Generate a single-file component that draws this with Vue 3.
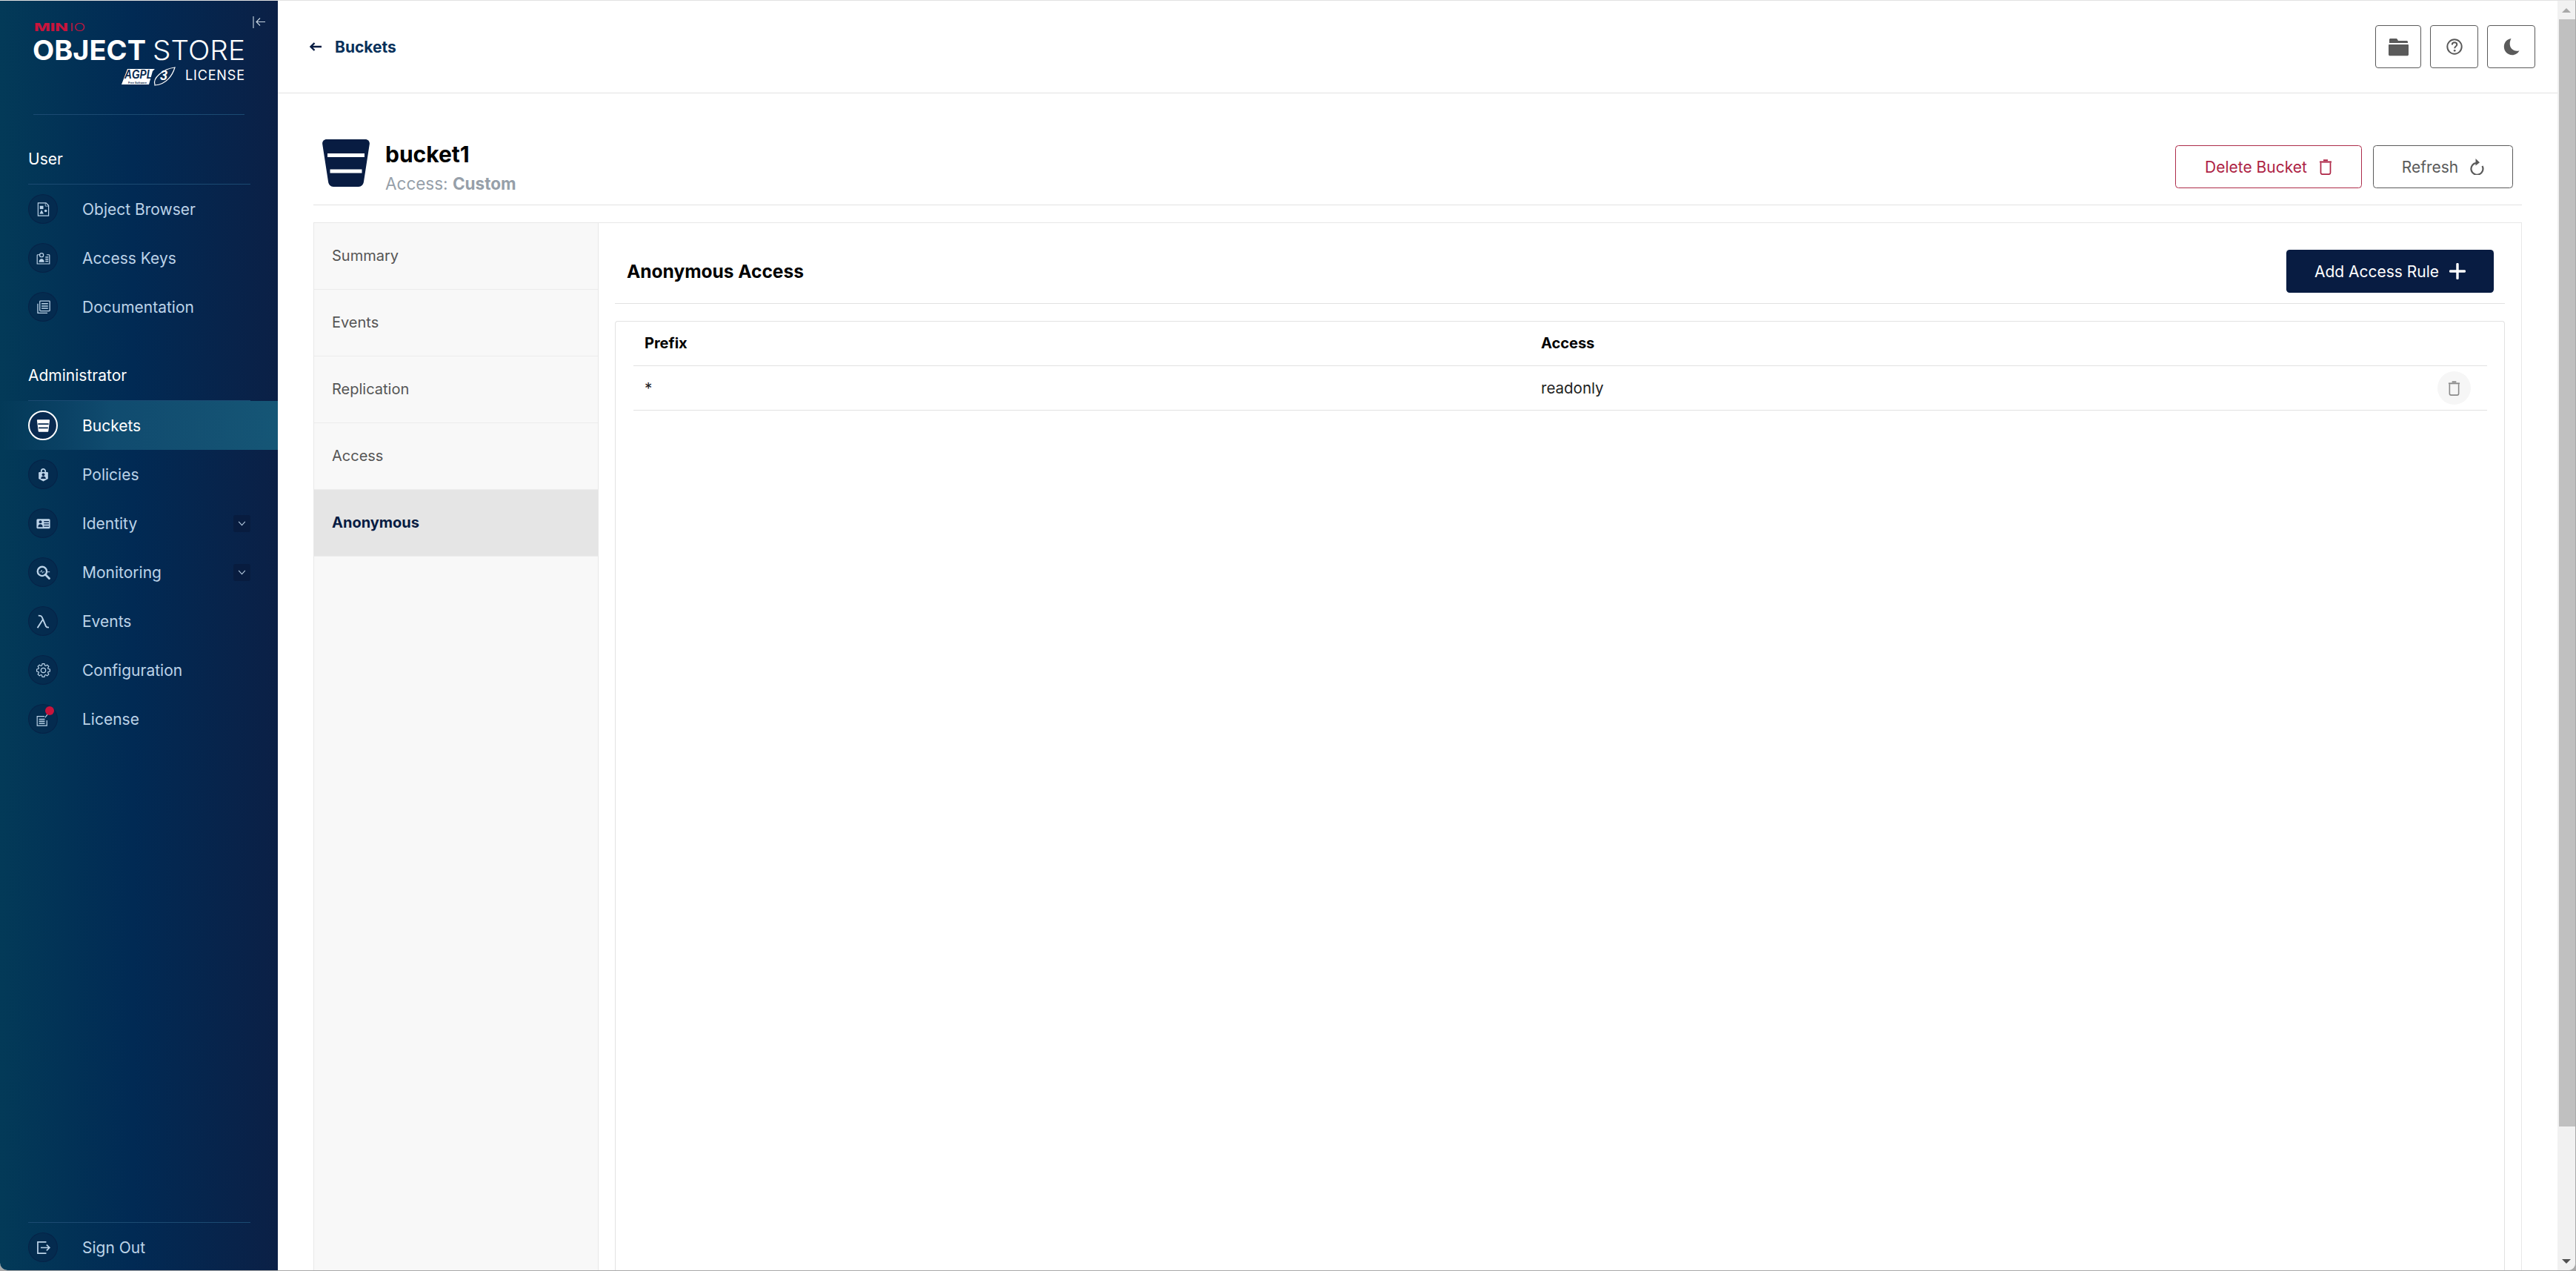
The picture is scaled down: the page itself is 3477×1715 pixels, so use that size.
<script setup>
function gear() {
  const cx = 12, cy = 12, n = 8, r1 = 11.4, r2 = 8.6
  let d = ''
  for (let i = 0; i < n; i++) {
    const a = (i / n) * Math.PI * 2
    const w = 0.2, g = 0.25
    const pts = [
      [r2, a - g - 0.06], [r1, a - w + 0.03], [r1, a + w - 0.03], [r2, a + g + 0.06]
    ]
    pts.forEach(([r, t], j) => {
      const x = (cx + r * Math.cos(t)).toFixed(2)
      const y = (cy + r * Math.sin(t)).toFixed(2)
      d += (i === 0 && j === 0 ? 'M' : 'L') + x + ' ' + y + ' '
    })
  }
  return d + 'Z'
}

const icons = {
  browser:
    '<path d="M3 1h13.500L21 5.500V23H3z" fill="none" stroke="currentColor" stroke-width="1.500"/><path d="M15.500 1.500v5h5" fill="none" stroke="currentColor" stroke-width="1"/><rect x="6" y="6" width="6" height="5.500" fill="currentColor"/><path d="M9 13l3.500 6.500h-7z" fill="currentColor"/><circle cx="16" cy="14.500" r="2.300" fill="currentColor"/>',
  keys:
    '<path d="M6.500 6H2.500a1 1 0 0 0-1 1v14.500h21V7a1 1 0 0 0-1-1h-4" fill="none" stroke="currentColor" stroke-width="1.500"/><circle cx="9" cy="6.500" r="3.200" fill="none" stroke="currentColor" stroke-width="1.600"/><path d="M4.500 18.500c0-3.500 2-5.500 4.500-5.500s4.500 2 4.500 5.500z" fill="currentColor"/><path d="M15.500 10h5M15.500 13.500h5M15.500 17h5" stroke="currentColor" stroke-width="2"/>',
  docs:
    '<path d="M2.500 6v16H19" fill="none" stroke="currentColor" stroke-width="1.600"/><rect x="6" y="1.500" width="17" height="17" rx="1" fill="none" stroke="currentColor" stroke-width="1.600"/><path d="M9 6h11M9 10h11M9 14h11" stroke="currentColor" stroke-width="1.800"/>',
  bucket:
    '<path d="M2.600 1.500h18.800c.9 0 1.500.7 1.400 1.600l-2.200 18c-.1.800-.8 1.400-1.600 1.400H5c-.8 0-1.500-.6-1.600-1.400L1.200 3.100C1.100 2.200 1.700 1.500 2.600 1.500z" fill="currentColor"/><path d="M3 9h18M4 15.500h16" stroke="#092a50" stroke-width="2.200"/>',
  policies:
    '<path d="M8.500 8V6a3.500 3.500 0 0 1 7 0v2" fill="none" stroke="currentColor" stroke-width="2.200"/><path d="M5.500 7.500h13c.8 0 1.500.7 1.500 1.500v10l-8 4.500L4 19V9c0-.8.700-1.500 1.500-1.500z" fill="currentColor"/><circle cx="12" cy="11.800" r="2.400" fill="#0a2a50"/><path d="M7.800 19c0-2.800 1.800-4.500 4.200-4.500s4.200 1.700 4.200 4.500z" fill="#0a2a50"/>',
  identity:
    '<rect x="0.500" y="4" width="23" height="16.500" rx="2" fill="currentColor"/><circle cx="7" cy="9" r="2.500" fill="#0a2a50"/><path d="M3 18c0-3.200 1.800-5 4-5s4 1.800 4 5z" fill="#0a2a50"/><path d="M13 8.500h8.500M13 12.500h8.500M13 16.500h8.500" stroke="#0a2a50" stroke-width="1.700"/>',
  monitoring:
    '<circle cx="10" cy="10" r="7.800" fill="none" stroke="currentColor" stroke-width="3"/><path d="M15.500 15.500l6.500 6.500" stroke="currentColor" stroke-width="3.600" stroke-linecap="round"/><path d="M5.500 11h2l1.500-3 1.500 5 1.200-2h2.500" fill="none" stroke="currentColor" stroke-width="1"/><path d="M19 11h4" stroke="currentColor" stroke-width="1.300"/>',
  lambda:
    '<path d="M3.500 2c4.500 0 5.500.8 7 4.500l6 14c.7 1.300 1.700 1.800 5 1.800M11.300 8.500L2 23" fill="none" stroke="currentColor" stroke-width="2.400"/>',
  config:
    `<path d="${gear()}" fill="none" stroke="currentColor" stroke-width="1.500" stroke-linejoin="round"/><circle cx="12" cy="12" r="4" fill="none" stroke="currentColor" stroke-width="1.600"/>`,
  license:
    '<path d="M14 7H1.500v16H18V14" fill="none" stroke="currentColor" stroke-width="1.500"/><path d="M4.500 12h10M4.500 15.500h10M4.500 19h10" stroke="currentColor" stroke-width="1.800"/><path d="M15 9l4-5" stroke="currentColor" stroke-width="1.500"/>',
  signout:
    '<path d="M17 2.500H2.500v19H17" fill="none" stroke="currentColor" stroke-width="2.200"/><path d="M7.500 12h15M17.500 7l5 5-5 5" fill="none" stroke="currentColor" stroke-width="2.200"/>'
}

const userItems = [
  { label: 'Object Browser', icon: 'browser' },
  { label: 'Access Keys', icon: 'keys' },
  { label: 'Documentation', icon: 'docs' }
]
const adminItems = [
  { label: 'Buckets', icon: 'bucket', active: true },
  { label: 'Policies', icon: 'policies' },
  { label: 'Identity', icon: 'identity', chevron: true },
  { label: 'Monitoring', icon: 'monitoring', chevron: true },
  { label: 'Events', icon: 'lambda' },
  { label: 'Configuration', icon: 'config' },
  { label: 'License', icon: 'license', badge: true }
]
const tabs = ['Summary', 'Events', 'Replication', 'Access', 'Anonymous']
</script>

<template>
  <div class="root">
    <aside class="sidebar">
      <div class="logo">
        <svg class="logo-svg" viewBox="0 0 375 154" width="375" height="154">
          <text x="46" y="42" class="l-minio" textLength="46" lengthAdjust="spacingAndGlyphs">MIN</text>
          <text x="94" y="42" class="l-minio2" textLength="21" lengthAdjust="spacingAndGlyphs">IO</text>
          <text x="44" y="81" class="l-object" textLength="153" lengthAdjust="spacingAndGlyphs">OBJECT</text>
          <text x="206" y="81" class="l-store" textLength="125" lengthAdjust="spacingAndGlyphs">STORE</text>
          <path d="M172 93h37l-3 3-5 18h-37z" fill="#fff"/>
          <text x="168" y="106" class="l-agpl" textLength="38" lengthAdjust="spacingAndGlyphs">AGPL</text>
          <text x="173" y="113" class="l-free" textLength="25" lengthAdjust="spacingAndGlyphs">Free Software</text>
          <path d="M209 114c-3-8 10-21 27-23-3 10-11 23-27 24z" fill="#0a2a50" stroke="#fff" stroke-width="1.200"/>
          <text x="216" y="108" class="l-3">3</text>
          <text x="250" y="108" class="l-license" textLength="80" lengthAdjust="spacing">LICENSE</text>
        </svg>
        <svg class="collapse" viewBox="0 0 18 18" width="18" height="18">
          <path d="M1 1v16M17 8.500H5M10 3.500l-5 5 5 5" fill="none" stroke="#c9d6e2" stroke-width="1.100"/>
        </svg>
      </div>
      <div class="logo-rule"></div>

      <div class="sec-head">User</div>
      <div v-for="it in userItems" :key="it.label" class="nav">
        <span class="circle"><svg viewBox="0 0 24 24" width="19" height="19" v-html="icons[it.icon]"></svg></span>
        <span class="nav-label">{{ it.label }}</span>
      </div>

      <div class="sec-head">Administrator</div>
      <div v-for="it in adminItems" :key="it.label" class="nav" :class="{ active: it.active }">
        <span class="circle">
          <svg viewBox="0 0 24 24" width="19" height="19" v-html="icons[it.icon]"></svg>
          <span v-if="it.badge" class="badge"></span>
        </span>
        <span class="nav-label">{{ it.label }}</span>
        <span v-if="it.chevron" class="chev">
          <svg viewBox="0 0 12 8" width="11" height="7"><path d="M1 1l5 5.500L11 1" fill="none" stroke="#b5cbe0" stroke-width="1.200"/></svg>
        </span>
      </div>

      <div class="spacer"></div>
      <div class="foot-rule"></div>
      <div class="nav foot">
        <span class="circle"><svg viewBox="0 0 24 24" width="19" height="19" v-html="icons.signout"></svg></span>
        <span class="nav-label">Sign Out</span>
      </div>
    </aside>

    <main class="main">
      <header class="topbar">
        <div class="back">
          <svg viewBox="0 0 16 12" width="16" height="12"><path d="M16 6H2M6.500 1L1.500 6l5 5" fill="none" stroke="#081c42" stroke-width="2.400"/></svg>
          <span>Buckets</span>
        </div>
        <div class="top-actions">
          <button class="btn-icon wide">
            <svg viewBox="0 0 28 25" width="28" height="25"><path d="M2 2.500c0-.8.700-1.500 1.500-1.500H11c1 0 1.500.5 2 1.300L14 4h11.500c.9 0 1.500.7 1.500 1.500V7H2z" fill="#5a5a5a"/><path d="M1 9h26c.6 0 1 .4 1 1v12.500c0 1-.8 1.800-1.800 1.800H2.800c-1 0-1.800-.8-1.800-1.800V10c0-.6.400-1 1-1z" fill="#5a5a5a"/></svg>
          </button>
          <button class="btn-icon">
            <svg viewBox="0 0 22 22" width="22" height="22"><circle cx="11" cy="11" r="9.700" fill="none" stroke="#5a5a5a" stroke-width="2"/><path d="M7.800 8.500c0-2 1.400-3.200 3.300-3.200s3.200 1.200 3.200 2.900c0 2.400-3.100 2.400-3.100 5" fill="none" stroke="#5a5a5a" stroke-width="2"/><circle cx="11.200" cy="16.300" r="1.400" fill="#5a5a5a"/></svg>
          </button>
          <button class="btn-icon">
            <svg viewBox="0 0 22 24" width="22" height="24"><path d="M10.500 1C4.800 1.700.8 6.200.8 12c0 6.300 5 11.200 11 11.200 4.300 0 8-2.500 9.700-6-1 .4-2.200.6-3.300.6-5.500 0-9.500-4.400-9.500-9.500 0-2.800.6-5 1.800-7.300z" fill="#5a5a5a"/></svg>
          </button>
        </div>
      </header>

      <section class="page-head">
        <svg class="bucket-big" viewBox="0 0 64 64" width="64" height="64">
          <path d="M6 0h52c4 0 6.300 3 5.800 6.500L56 57c-.5 4-3.200 7-7 7H15c-3.800 0-6.500-3-7-7L.2 6.500C-.3 3 2 0 6 0z" fill="#081c42"/>
          <path d="M7 21.500h50" stroke="#fff" stroke-width="5"/>
          <path d="M10.500 43h43" stroke="#fff" stroke-width="5"/>
        </svg>
        <div class="bucket-text">
          <div class="bucket-name">bucket1</div>
          <div class="bucket-sub">Access: <b>Custom</b></div>
        </div>
        <div class="page-actions">
          <button class="btn danger">
            <span>Delete Bucket</span>
            <svg viewBox="0 0 18 22" width="18" height="22"><path d="M2.500 5.500V19c0 1.300 1 2.200 2.200 2.200h8.600c1.200 0 2.200-.9 2.200-2.200V5.500" fill="none" stroke="currentColor" stroke-width="1.700"/><path d="M1 3.500h16v2H1z" fill="currentColor"/><path d="M6 2.300h6" stroke="currentColor" stroke-width="2"/></svg>
          </button>
          <button class="btn neutral">
            <span>Refresh</span>
            <svg viewBox="0 0 20 22" width="20" height="22"><path d="M8.700 4.800A8 8 0 1 0 16.500 9" fill="none" stroke="currentColor" stroke-width="2.200" transform="translate(1 1)"/><path d="M8.500 0l5.500 5.300-5.500 4.200z" fill="currentColor"/></svg>
          </button>
        </div>
      </section>

      <section class="panel">
        <nav class="tabs">
          <div v-for="t in tabs" :key="t" class="tab" :class="{ on: t === 'Anonymous' }">{{ t }}</div>
        </nav>
        <div class="pane">
          <div class="pane-head">
            <h2>Anonymous Access</h2>
            <button class="btn primary">
              <span>Add Access Rule</span>
              <svg viewBox="0 0 22 22" width="22" height="22"><path d="M11 1.500v19M1.500 11h19" stroke="#fff" stroke-width="3.400" stroke-linecap="round"/></svg>
            </button>
          </div>
          <div class="table">
            <div class="row head"><span>Prefix</span><span>Access</span></div>
            <div class="row">
              <span>*</span><span>readonly</span>
              <span class="trash">
                <svg viewBox="0 0 18 22" width="17" height="21"><path d="M2.500 5.500V19c0 1.300 1 2.200 2.200 2.200h8.600c1.200 0 2.200-.9 2.200-2.200V5.500" fill="none" stroke="#8a8a8a" stroke-width="1.700"/><path d="M1 3.500h16v2H1z" fill="#8a8a8a"/><path d="M6 2.300h6" stroke="#8a8a8a" stroke-width="2"/></svg>
              </span>
            </div>
          </div>
        </div>
      </section>
    </main>

    <div class="scrollbar">
      <div class="sb-btn"><i class="tri up"></i></div>
      <div class="sb-thumb"></div>
      <div class="sb-track"></div>
      <div class="sb-btn"><i class="tri down"></i></div>
    </div>
  </div>
</template>

<style scoped>
.root {
  display: flex;
  height: 1714px;
  box-sizing: border-box;
  border-top: 1px solid #e2e2e2;
  border-right: 1px solid #a9a9a9;
  background: #fff;
  overflow: hidden;
  border-radius: 0 0 10px 10px;
  font-family: Inter, "Liberation Sans", sans-serif;
}
.sidebar {
  position: relative;
  width: 375px;
  flex: none;
  display: flex;
  flex-direction: column;
  background: linear-gradient(90deg, #033a58 0%, #012a54 48%, #0b2046 100%);
  color: #bcd3e8;
}
.logo { height: 153px; flex: none; }
.logo-svg { display: block; margin-top: -1px; }
.l-minio { font: 800 14px Inter, sans-serif; fill: #c8143c; }
.l-minio2 { font: 300 14px Inter, sans-serif; fill: #c8143c; }
.l-object { font: 700 37px Inter, sans-serif; fill: #fff; }
.l-store { font: 300 37px Inter, sans-serif; fill: #fff; }
.l-agpl { font: italic 700 16px "Liberation Sans", sans-serif; fill: #0a2a50; }
.l-free { font: 700 3.500px "Liberation Sans", sans-serif; fill: #0a2a50; }
.l-3 { font: italic 700 18px "Liberation Sans", sans-serif; fill: #fff; }
.l-license { font: 400 18px Inter, sans-serif; fill: #fff; }
.collapse { position: absolute; left: 341px; top: 20px; }
.logo-rule { height: 1px; margin: 0 45px; background: #1b4a72; flex: none; }
.sec-head {
  flex: none;
  margin: 43px 37px 0 38px;
  line-height: 34px;
  padding-bottom: 16px;
  border-bottom: 1px solid #1b4a72;
  font-size: 21px;
  color: #fff;
}
.nav {
  flex: none;
  height: 66px;
  display: flex;
  align-items: center;
  padding-left: 38px;
  font-size: 21px;
}
.nav.foot { height: 64px; box-sizing: border-box; padding-top: 2px; }
.circle {
  position: relative;
  flex: none;
  width: 40px;
  height: 40px;
  box-sizing: border-box;
  border: 1px solid rgba(8, 28, 66, 0.55);
  border-radius: 50%;
  background: rgba(8, 28, 66, 0.35);
  display: flex;
  align-items: center;
  justify-content: center;
}
.nav-label { margin-left: 33px; }
.nav.active {
  background: linear-gradient(90deg, rgba(21, 86, 120, 0) 0%, rgba(21, 86, 120, 0.75) 40%, #155676 100%);
  color: #fff;
}
.nav.active .circle { border: 2px solid #fff; background: #092a50; color: #fff; }
.badge {
  position: absolute;
  left: 22px;
  top: 2px;
  width: 12px;
  height: 12px;
  border-radius: 50%;
  background: #c8143c;
}
.chev {
  margin-left: auto;
  margin-right: 37px;
  width: 23px;
  height: 23px;
  border-radius: 3px;
  background: #081c3f;
  display: flex;
  align-items: center;
  justify-content: center;
}
.spacer { flex: 1; }
.foot-rule { height: 1px; margin: 0 37px 0 38px; background: #1b4a72; flex: none; }

.main { flex: 1; min-width: 0; display: flex; flex-direction: column; }
.topbar {
  flex: none;
  height: 125px;
  box-sizing: border-box;
  border-bottom: 1px solid #e2e2e2;
  padding: 0 30px 0 43px;
  display: flex;
  align-items: center;
  justify-content: space-between;
}
.back {
  display: flex;
  align-items: center;
  gap: 18px;
  font-size: 21px;
  font-weight: 700;
  color: #07305a;
}
.top-actions { display: flex; gap: 12px; }
.btn-icon {
  width: 65px;
  height: 58px;
  padding: 0;
  background: #fff;
  border: 1px solid #5a5a5a;
  border-radius: 4px;
  display: flex;
  align-items: center;
  justify-content: center;
}
.btn-icon.wide { width: 62px; }
.page-head {
  flex: none;
  height: 151px;
  box-sizing: border-box;
  margin: 0 48px;
  padding: 62px 12px 0 12px;
  border-bottom: 1px solid #e2e2e2;
  display: flex;
  align-items: flex-start;
}
.bucket-big { flex: none; }
.bucket-text { margin-left: 21px; }
.bucket-name { margin-top: 2px; font-size: 30px; line-height: 36px; font-weight: 700; color: #000; }
.bucket-sub { margin-top: 7px; font-size: 22.500px; line-height: 30px; color: #969fa9; }
.bucket-sub b { font-weight: 700; }
.page-actions { margin-left: auto; margin-top: 8px; display: flex; gap: 15px; }
.btn {
  height: 58px;
  box-sizing: border-box;
  border-radius: 4.500px;
  background: #fff;
  display: flex;
  align-items: center;
  justify-content: center;
  font: 400 21px Inter, "Liberation Sans", sans-serif;
}
.btn.danger { width: 252px; gap: 16px; color: #ad2344; border: 1px solid #ad2c4a; }
.btn.neutral { width: 189px; gap: 15px; color: #5a5a5a; border: 1px solid #5a5a5a; }
.btn.primary { width: 280px; gap: 14px; border: none; background: #081c42; color: #fff; margin-right: 15px; }
.panel {
  flex: 1;
  min-height: 0;
  margin: 23px 48px 0;
  box-sizing: border-box;
  border: 1px solid #e8e8e8;
  border-bottom: none;
  display: flex;
}
.tabs { flex: none; width: 384px; background: #f8f8f8; border-right: 1px solid #e8e8e8; box-sizing: border-box; }
.tab {
  height: 90px;
  box-sizing: border-box;
  border-bottom: 1px solid #ececec;
  padding: 0 0 2px 24px;
  display: flex;
  align-items: center;
  font-size: 20px;
  color: #555;
}
.tab.on { background: #e5e5e5; color: #081c42; font-weight: 700; }
.pane { flex: 1; min-width: 0; display: flex; flex-direction: column; padding: 0 22px; }
.pane-head {
  flex: none;
  height: 109px;
  box-sizing: border-box;
  padding-top: 22px;
  border-bottom: 1px solid #e2e2e2;
  display: flex;
  align-items: center;
  justify-content: space-between;
}
.pane-head h2 { margin: 0 0 0 16px; font-size: 24.500px; font-weight: 700; color: #000; }
.table {
  flex: 1;
  margin-top: 23px;
  box-sizing: border-box;
  border: 1px solid #e2e2e2;
  border-bottom: none;
  border-radius: 4px 4px 0 0;
  padding: 0 23px 0 24px;
}
.row {
  height: 60px;
  box-sizing: border-box;
  border-bottom: 1px solid #e2e2e2;
  padding: 0 0 1px 15px;
  display: grid;
  grid-template-columns: 1210px 1fr auto;
  align-items: center;
  font-size: 20.500px;
  color: #222;
}
.row.head { padding-bottom: 2px; font-size: 20px; font-weight: 700; color: #000; }
.trash {
  width: 45px;
  height: 45px;
  margin-right: 22px;
  border-radius: 50%;
  background: #f6f6f6;
  display: flex;
  align-items: center;
  justify-content: center;
}
.scrollbar { flex: none; width: 24px; display: flex; flex-direction: column; background: #f1f1f1; }
.sb-btn { height: 25px; flex: none; display: flex; align-items: center; justify-content: center; }
.sb-thumb { height: 1494px; flex: none; margin-left: 2px; background: #c0c0c0; }
.sb-track { flex: 1; }
.tri { width: 0; height: 0; border-left: 6px solid transparent; border-right: 6px solid transparent; }
.tri.up { border-bottom: 6px solid #a8a8a8; }
.tri.down { border-top: 6px solid #505050; }
</style>

<style>
html, body { margin: 0; background: #a9a9a9; overflow: hidden; height: 1715px; }
button { cursor: default; }
</style>
